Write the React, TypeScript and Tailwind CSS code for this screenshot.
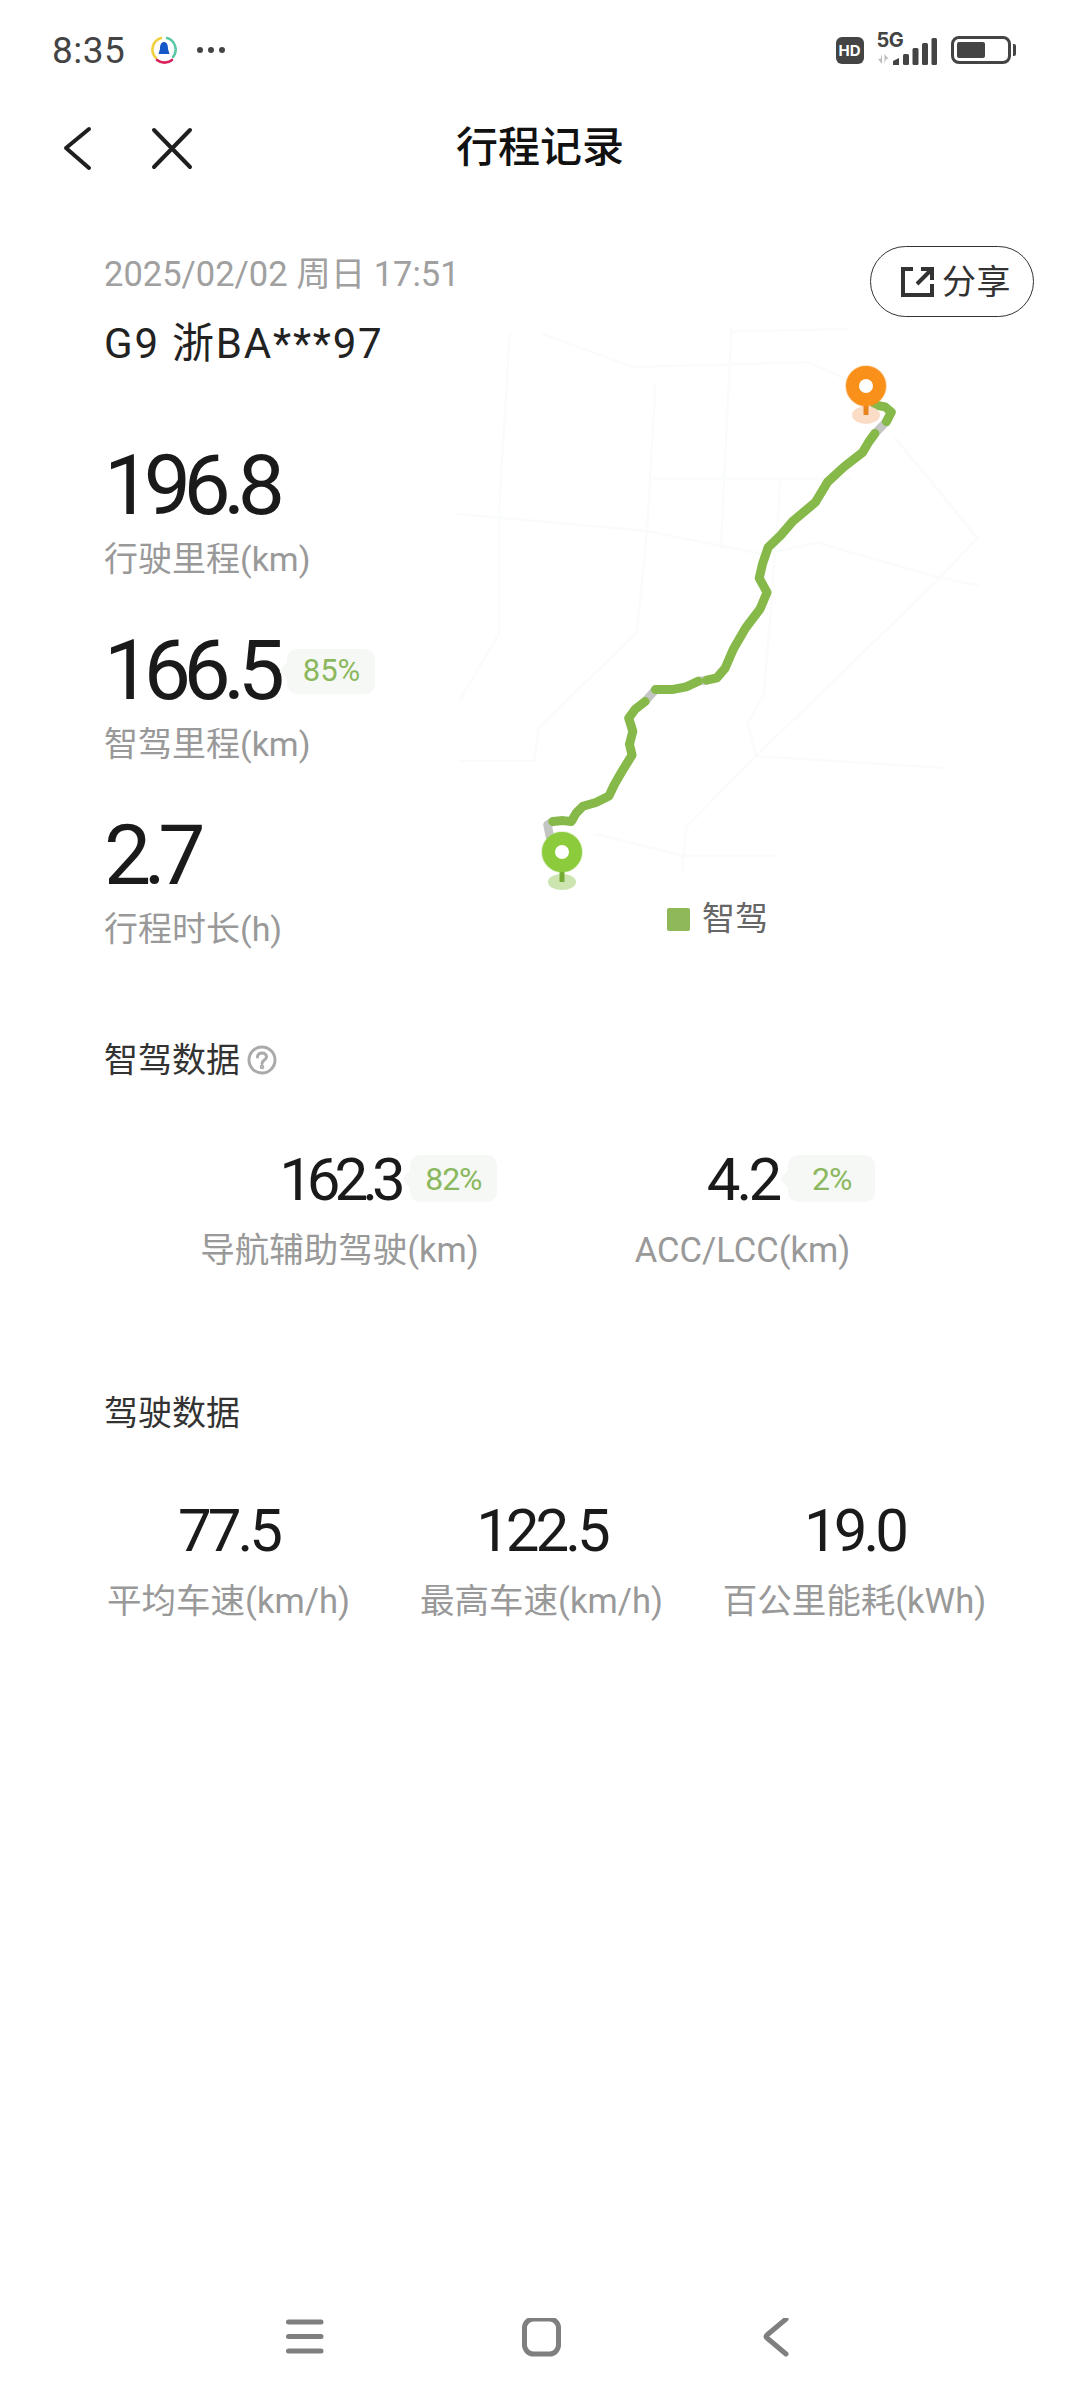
const cjk = "font-['Roboto','Noto_Sans_CJK_SC',sans-serif]";

const SX = 2.4375;
const SY = 2.108;
const line = (pts: number[][]) => pts.map(([x, y]) => `${(x / SX).toFixed(1)},${(y / SY).toFixed(1)}`).join(' ');

const roads: number[][][] = [
  [[45, 620], [500, 655], [790, 705], [920, 680], [1200, 750], [1310, 770]],
  [[170, 240], [145, 600], [145, 870], [50, 1010]],
  [[525, 350], [505, 650], [480, 870], [240, 1070], [230, 1140], [50, 1140]],
  [[710, 230], [685, 690]],
  [[830, 550], [790, 1000], [750, 1060], [770, 1130], [1230, 1155]],
  [[520, 545], [1000, 545]],
  [[250, 240], [470, 310], [900, 300], [1000, 340]],
  [[1310, 670], [1200, 770], [770, 1130], [600, 1280], [590, 1370]],
  [[380, 1295], [590, 1340], [820, 1340]],
  [[1110, 460], [1310, 670]],
  [[710, 235], [990, 230]],
];

const greens: number[][][] = [
  [[275, 1268], [300, 1266], [320, 1268], [332, 1250], [348, 1236], [380, 1228], [412, 1214], [425, 1190], [445, 1160], [468, 1128], [462, 1105], [470, 1078], [460, 1050], [475, 1032], [500, 1015]],
  [[525, 990], [565, 990], [600, 984], [630, 972]],
  [[650, 970], [675, 965], [695, 945], [715, 905], [745, 860], [780, 820], [797, 785], [778, 755], [786, 725], [800, 690], [830, 665], [860, 635], [915, 595], [945, 552], [985, 520], [1030, 490], [1045, 468], [1060, 450]],
  [[1088, 425], [1100, 405], [1085, 394], [1060, 390]],
];

const grays: number[][][] = [
  [[268, 1300], [262, 1275], [275, 1268]],
  [[500, 1015], [525, 990]],
  [[630, 972], [650, 970]],
  [[1060, 450], [1088, 425]],
];

function RouteMap() {
  return (
    <svg className="absolute left-[440px] top-[220px]" width="640" height="740" viewBox="0 0 640 740" fill="none">
      {roads.map((r, i) => (
        <polyline key={i} points={line(r)} stroke="#fafbfb" strokeWidth="2.5" strokeLinejoin="round" strokeLinecap="round" />
      ))}
      {grays.map((r, i) => (
        <polyline key={i} points={line(r)} stroke="#c4c6c4" strokeWidth="8.5" strokeLinejoin="round" strokeLinecap="round" />
      ))}
      {greens.map((r, i) => (
        <polyline key={i} points={line(r)} stroke="#86b94a" strokeWidth="9" strokeLinejoin="round" strokeLinecap="round" />
      ))}
      <ellipse cx="426" cy="195" rx="14" ry="9" fill="#fbdcc6" />
      <rect x="423.500" y="180" width="5" height="15" fill="#e8821c" />
      <circle cx="426" cy="166" r="21" fill="#f9901a" opacity="0.25" />
      <circle cx="426" cy="166" r="13.500" stroke="#f9901a" strokeWidth="13" fill="#fff" />
      <ellipse cx="122" cy="662" rx="14" ry="8" fill="#cbe4b0" />
      <rect x="119.500" y="647" width="5" height="15" fill="#74ab35" />
      <circle cx="122" cy="632" r="21" fill="#8ccc3c" opacity="0.25" />
      <circle cx="122" cy="632" r="13.500" stroke="#8ccc3c" strokeWidth="13" fill="#fff" />
    </svg>
  );
}

function Badge({ text, className }: { text: string; className: string }) {
  return (
    <span className={`items-center justify-center rounded-[10px] bg-[#f6f8f5] text-[#8bb85f] ${className}`}>
      <span className="absolute left-[-5px] top-1/2 size-[16px] -translate-y-1/2 rotate-45 rounded-[3px] bg-[#f6f8f5]" />
      <span className="relative">{text}</span>
    </span>
  );
}

function Stat({ value, label, badge }: { value: string; label: string; badge?: string }) {
  return (
    <div className="flex h-[185px] flex-col">
      <div className="flex h-[92px] items-center">
        <span className="text-[84px] leading-[92px] tracking-[-7.5px] text-[#1a1a1a]">{value}</span>
        {badge && <Badge text={badge} className="relative ml-[10px] flex h-[45px] w-[88px] text-[31px]" />}
      </div>
      <div className="mt-[4px] text-[34px] leading-[46px] text-[#999999]">{label}</div>
    </div>
  );
}

function Metric({ value, label, badge, tight }: { value: string; label: string; badge?: string; tight?: boolean }) {
  return (
    <div className="flex flex-col items-center">
      <div className={`relative h-[70px] text-[60px] leading-[70px] text-[#1a1a1a] ${tight ? 'tracking-[-6px]' : 'tracking-[-4px]'}`}>
        {value}
        {badge && <Badge text={badge} className="absolute left-[calc(100%+10px)] top-[10px] flex h-[47px] w-[87px] text-[32px] tracking-[-1px]" />}
      </div>
      <div className="mt-[12px] whitespace-nowrap text-[34.5px] leading-[46px] text-[#999999]">{label}</div>
    </div>
  );
}

function StatusBar() {
  return (
    <div className="flex h-[100px] items-center pl-[52px] pr-[64px] text-[#444444]">
      <span className="w-[95px] text-[37px] leading-none tracking-[0.5px]">8:35</span>
      <svg width="34" height="34" viewBox="0 0 34 34" fill="none">
        <path d="M9 25 A12 12 0 0 1 14 5" stroke="#f2cf3c" strokeWidth="2.6" strokeLinecap="round" />
        <path d="M20 5 A12 12 0 0 1 26 24" stroke="#5cc8a8" strokeWidth="2.6" strokeLinecap="round" />
        <path d="M10 27 A12 12 0 0 0 25 27" stroke="#d9225a" strokeWidth="2.6" strokeLinecap="round" />
        <path d="M17 9 C13.500 9 13 13 13 16 L11.500 21 H22.500 L21 16 C21 13 20.500 9 17 9 Z" fill="#1556c8" />
      </svg>
      <div className="ml-[16px] flex gap-[5px]">
        <span className="size-[6px] rounded-full bg-[#444444]" />
        <span className="size-[6px] rounded-full bg-[#444444]" />
        <span className="size-[6px] rounded-full bg-[#444444]" />
      </div>
      <div className="flex-1" />
      <div className="flex h-[27px] w-[28px] items-center justify-center rounded-[6px] bg-[#444444] font-['Inter',sans-serif] text-[15px] font-bold leading-none text-white">HD</div>
      <div className="relative ml-[13px] h-[30px] w-[60px]">
        <span className="absolute left-0 top-[-6px] font-['Inter',sans-serif] text-[20px] font-bold leading-[22px] tracking-[-0.5px]">5G</span>
        <svg className="absolute left-0 top-0" width="60" height="30" viewBox="0 0 60 30" fill="#444444">
          <path d="M5 19 v10 l-4 -5 h2.500Z M7.500 29 v-10 l4 5 h-2.500Z" fill="#bbbbbb" />
          <path d="M16 26 l6 -3 v7 h-6 Z" />
          <rect x="26" y="19" width="6" height="11" rx="1.500" />
          <rect x="35.500" y="13" width="6" height="17" rx="1.500" />
          <rect x="45" y="8" width="6" height="22" rx="1.500" />
          <rect x="54.500" y="3" width="5.500" height="27" rx="1.500" />
        </svg>
      </div>
      <div className="ml-[14px] flex h-[28px] w-[60px] items-center rounded-[8px] border-[3px] border-[#444444] pl-[3px]">
        <div className="h-[16px] w-[28px] rounded-[2px] bg-[#444444]" />
      </div>
      <div className="ml-[2px] h-[12px] w-[3.500px] rounded-r-[2px] bg-[#444444]" />
    </div>
  );
}

export default function App() {
  return (
    <div className={`relative flex h-[2400px] w-[1080px] flex-col overflow-hidden bg-white ${cjk}`}>
      <RouteMap />
      <StatusBar />

      <div className="relative flex h-[96px] items-center justify-center">
        <svg className="absolute left-[60px] top-[24px]" width="140" height="48" viewBox="0 0 140 48" fill="none" stroke="#1f1f1f" strokeWidth="4" strokeLinecap="round" strokeLinejoin="round">
          <path d="M29 5 L6 24 L29 44" />
          <path d="M94 6 L130 43 M130 6 L94 43" />
        </svg>
        <span className="text-[42px] font-medium leading-none text-[#111111]">行程记录</span>
      </div>

      <div className="relative h-[841px] pl-[104px] pt-[54px]">
        <button className="absolute left-[870px] top-[50px] flex h-[71px] w-[164px] items-center rounded-full border border-[#333333] pl-[29px] text-[34px] leading-none tracking-[0.5px] text-[#333333]">
          <svg className="mr-[8px]" width="34" height="32" viewBox="0 0 34 32" fill="none" stroke="#333333" strokeWidth="4">
            <path d="M13 3 H3 V29 H32 V18" />
            <path d="M17 18 L30 5 M21 3 H32 V14" />
          </svg>
          分享
        </button>
        <div className="text-[34.5px] leading-[48px] text-[#a0a0a0]">2025/02/02 周日 17:51</div>
        <div className="mt-[21px] text-[42px] leading-[50px] tracking-[1.8px] text-[#222222]">G9 浙BA***97</div>
        <div className="mt-[71px] flex flex-col">
          <Stat value="196.8" label="行驶里程(km)" />
          <Stat value="166.5" label="智驾里程(km)" badge="85%" />
          <Stat value="2.7" label="行程时长(h)" />
        </div>
        <div className="absolute left-[667px] top-[701px] flex items-center">
          <span className="size-[23px] rounded-[2px] bg-[#8fb959]" />
          <span className="ml-[12px] text-[33px] leading-[44px] text-[#666666]">智驾</span>
        </div>
      </div>

      <div className="flex h-[353px] flex-col pl-[104px]">
        <div className="flex h-[46px] items-center text-[34px] text-[#333333]">
          智驾数据
          <svg className="ml-[7px]" width="30" height="30" viewBox="0 0 30 30" fill="none" stroke="#aaaaaa" strokeWidth="3">
            <circle cx="15" cy="15" r="13" />
            <path d="M10.500 12 C10.500 6.500 19.500 6.500 19.500 12 C19.500 15 15 15 15 18.500" strokeLinecap="round" />
            <circle cx="15" cy="22" r="0.800" fill="#aaaaaa" />
          </svg>
        </div>
        <div className="ml-[34px] mt-[62px] grid w-[806px] grid-cols-2">
          <Metric value="162.3" label="导航辅助驾驶(km)" badge="82%" tight />
          <Metric value="4.2" label="ACC/LCC(km)" badge="2%" />
        </div>
      </div>

      <div className="flex flex-col">
        <div className="flex h-[46px] items-center pl-[104px] text-[34px] text-[#333333]">驾驶数据</div>
        <div className="ml-[72px] mt-[60px] grid w-[939px] grid-cols-3">
          <Metric value="77.5" label="平均车速(km/h)" />
          <Metric value="122.5" label="最高车速(km/h)" />
          <Metric value="19.0" label="百公里能耗(kWh)" />
        </div>
      </div>

      <div className="flex-1" />
      <div className="flex h-[124px] items-start pl-[286px] pt-[42px]">
        <svg width="504" height="42" viewBox="0 0 504 42" fill="none" stroke="#7f7f7f" strokeWidth="5" strokeLinecap="round" strokeLinejoin="round">
          <path d="M2.500 4 H35 M2.500 18.500 H35 M2.500 33 H35" />
          <rect x="238.500" y="1" width="34" height="35" rx="9" />
          <path d="M500 1 L481 17 Q479 18.500 481 20 L500 36" />
        </svg>
      </div>
    </div>
  );
}
